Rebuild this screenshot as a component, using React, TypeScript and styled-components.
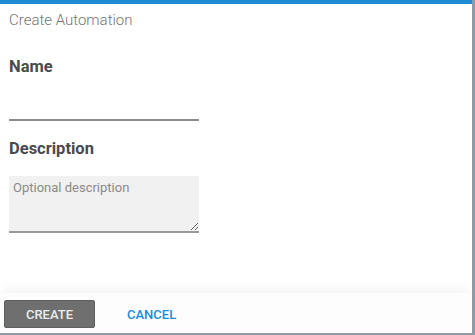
import React from 'react'
import styled, { createGlobalStyle } from 'styled-components'

const GlobalStyle = createGlobalStyle`
  html, body {
    margin: 0;
    padding: 0;
    background: #8e9ba6;
    font-family: Roboto, 'Liberation Sans', Arial, sans-serif;
  }
`

const Dialog = styled.div`
  width: 472px;
  height: 333px;
  box-sizing: border-box;
  background: #ffffff;
  border-top: 4px solid #1f8bd4;
  display: flex;
  flex-direction: column;
`

const Body = styled.div`
  flex: 1;
  padding: 6px 9px 0;
  display: flex;
  flex-direction: column;
`

const Title = styled.h1`
  margin: 0;
  font-size: 15px;
  font-weight: 300;
  line-height: 20px;
  color: #747474;
`

const Label = styled.label<{ $top: number }>`
  display: block;
  margin-top: ${(p) => p.$top}px;
  font-size: 16.5px;
  font-weight: 700;
  line-height: 20px;
  color: #4a4a4a;
`

const TextInput = styled.input`
  display: block;
  width: 190px;
  height: 20px;
  margin-top: 22px;
  padding: 0;
  border: 0;
  border-bottom: 2px solid #8c8c8c;
  background: transparent;
  font: inherit;
  outline: none;
`

const TextArea = styled.textarea`
  display: block;
  width: 190px;
  height: 57px;
  margin-top: 17px;
  box-sizing: border-box;
  padding: 4px 4px;
  border: 0;
  border-bottom: 2px solid #999999;
  background: #f1f1f1;
  font-family: inherit;
  font-size: 13px;
  color: #333;
  outline: none;
  resize: vertical;

  &::placeholder {
    color: #8a8a8a;
  }
`

const Footer = styled.div`
  height: 40px;
  box-sizing: border-box;
  padding: 7px 4px 5px;
  display: flex;
  align-items: center;
  gap: 32px;
  background: #fdfdfd;
  box-shadow: 0 -8px 10px -4px rgba(0, 0, 0, 0.05);
`

const Button = styled.button<{ $primary?: boolean }>`
  height: 28px;
  padding: 0 20px;
  min-width: 91px;
  box-sizing: border-box;
  border: ${(p) => (p.$primary ? '1px solid #5e5e5e' : '0')};
  border-radius: 2px;
  background: ${(p) => (p.$primary ? '#6f6f6f' : 'transparent')};
  color: ${(p) => (p.$primary ? '#ececec' : '#1a8bd9')};
  font-family: inherit;
  font-size: 13px;
  font-weight: 500;
  letter-spacing: 0;
  text-transform: uppercase;
  cursor: pointer;
`

const CancelButton = styled(Button)`
  min-width: 0;
  padding: 0;
`

export default function App() {
  return (
    <>
      <GlobalStyle />
      <Dialog>
        <Body>
          <Title>Create Automation</Title>
          <Label $top={27} htmlFor="name">
            Name
          </Label>
          <TextInput id="name" />
          <Label $top={18} htmlFor="description">
            Description
          </Label>
          <TextArea id="description" placeholder="Optional description" />
        </Body>
        <Footer>
          <Button $primary>Create</Button>
          <CancelButton>Cancel</CancelButton>
        </Footer>
      </Dialog>
    </>
  )
}
